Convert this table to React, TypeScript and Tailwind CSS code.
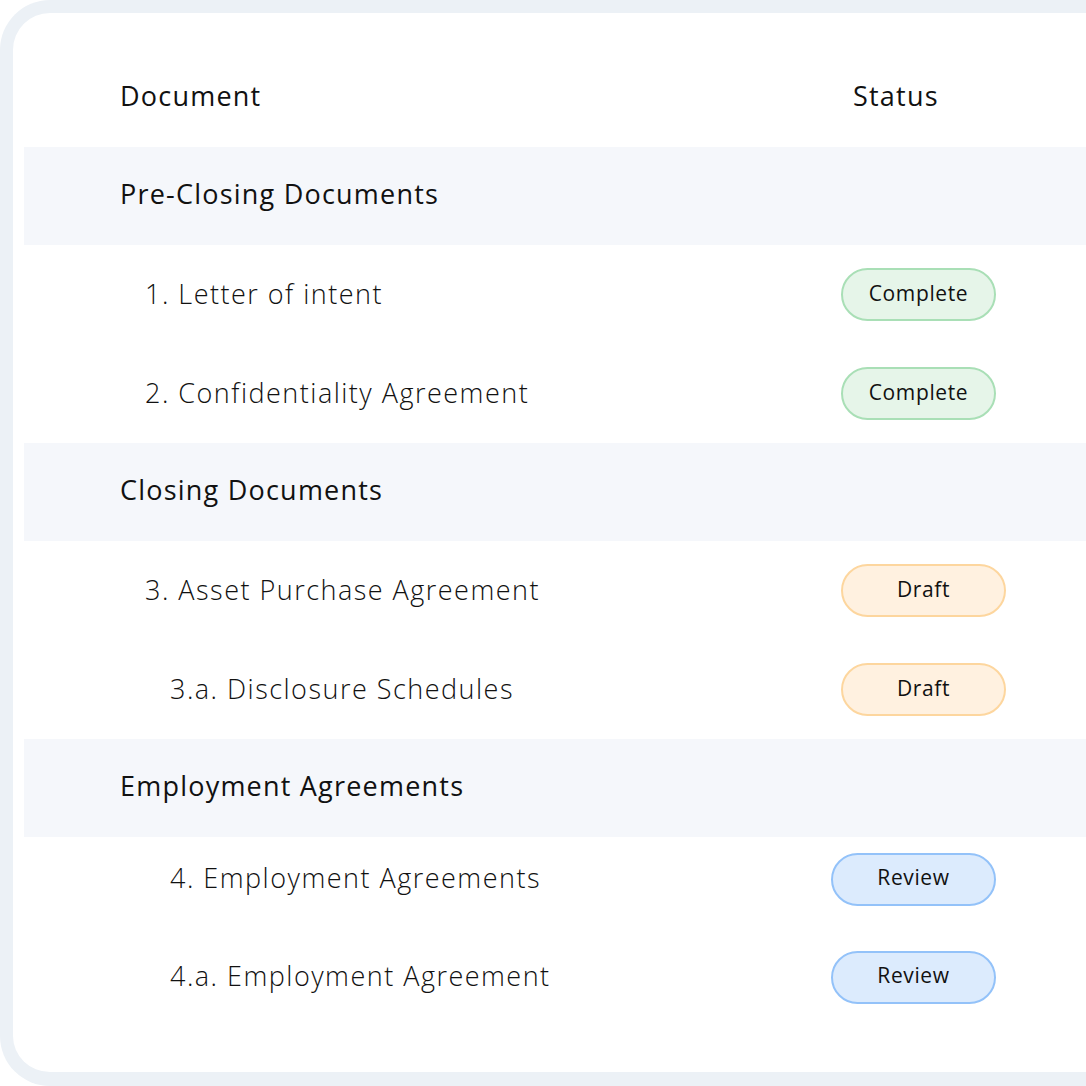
import React from "react";

type Status = "Complete" | "Draft" | "Review";

const badgeStyles: Record<Status, string> = {
  Complete: "bg-[#e6f5e9] border-[#a9dfb6] w-[155px] ml-[10px]",
  Draft: "bg-[#fff1e0] border-[#fdd69e] w-[165px] ml-[10px]",
  Review: "bg-[#dcebfd] border-[#93c2f9] w-[165px] ml-0",
};

function Badge({ status }: { status: Status }) {
  return (
    <div
      className={`h-[53px] rounded-full border-2 flex items-center justify-center pb-[2px] text-[21px] tracking-[0.03em] font-normal text-[#111] ${badgeStyles[status]}`}
    >
      {status}
    </div>
  );
}

function Section({ title }: { title: string }) {
  return (
    <div className="h-[98px] bg-[#f5f7fb] flex items-center pl-[96px] pb-[3px] text-[27px] tracking-[0.045em] font-medium text-[#111]">
      {title}
    </div>
  );
}

function Item({
  label,
  status,
  indent,
  h,
}: {
  label: string;
  status: Status;
  indent: string;
  h: string;
}) {
  return (
    <div className={`flex items-center ${h}`}>
      <div className={`w-[807px] pb-[1px] text-[27px] tracking-[0.055em] font-light text-[#111] ${indent}`}>{label}</div>
      <Badge status={status} />
    </div>
  );
}

export default function App() {
  return (
    <div
      className="w-[1086px] h-[1086px] overflow-hidden bg-white"
      style={{ fontFamily: "'Open Sans', 'Noto Sans', sans-serif" }}
    >
      <div className="w-[1140px] h-[1086px] border-[13px] border-b-[14px] border-r-0 border-[#ecf1f6] rounded-l-[50px] bg-white pl-[11px] pt-[34px]">
        <div className="flex items-center h-[100px] pb-[2px] text-[27px] tracking-[0.045em] font-medium text-[#111]">
          <div className="w-[807px] pl-[96px]">Document</div>
          <div className="ml-[22px]">Status</div>
        </div>
        <Section title="Pre-Closing Documents" />
        <Item label="1. Letter of intent" status="Complete" indent="pl-[121px]" h="h-[99px]" />
        <Item label="2. Confidentiality Agreement" status="Complete" indent="pl-[121px]" h="h-[99px]" />
        <Section title="Closing Documents" />
        <Item label="3. Asset Purchase Agreement" status="Draft" indent="pl-[121px]" h="h-[99px]" />
        <Item label="3.a. Disclosure Schedules" status="Draft" indent="pl-[146px]" h="h-[99px]" />
        <Section title="Employment Agreements" />
        <Item label="4. Employment Agreements" status="Review" indent="pl-[146px]" h="h-[84px]" />
        <Item label="4.a. Employment Agreement" status="Review" indent="pl-[146px]" h="h-[112px]" />
      </div>
    </div>
  );
}
